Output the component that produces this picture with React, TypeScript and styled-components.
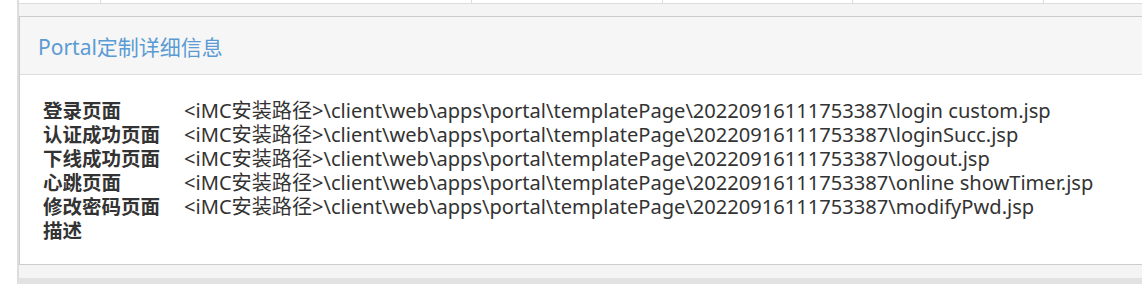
import * as React from "react";
import styled, { createGlobalStyle } from "styled-components";

// styled components
const GlobalStyle = createGlobalStyle`
body {
  margin: 0;
  background-color: #ffffff;
  font-family: "Noto Sans", "Noto Sans CJK SC", sans-serif;
}
`;

const Page = styled.main`
  padding-left: 17px;
  height: 284px;
  overflow: hidden;
`;

const Frame = styled.div`
  border-left: 2px solid #dddddd;
  border-bottom: 6px solid #e2e2e2;
  background-color: #f4f4f4;
  padding-bottom: 13px;
`;

const TableRow = styled.div`
  display: flex;
  height: 3px;
  background-color: #ffffff;
  border-bottom: 1px solid #dddddd;
`;

const TableCell = styled.div<{ $w: number }>`
  width: ${(p) => p.$w}px;
  flex: none;
  border-right: 1px solid #dddddd;
`;

const Gap = styled.div`
  height: 12px;
`;

const Panel = styled.section`
  border-top: 1px solid #cccccc;
  border-left: 1px solid #cccccc;
  border-bottom: 1px solid #cccccc;
  background-color: #ffffff;
`;

const PanelHeader = styled.header`
  height: 57px;
  display: flex;
  align-items: center;
  padding-left: 18px;
  background-color: #f6f6f6;
  border-bottom: 1px solid #dddddd;
  font-size: 21px;
  color: #5a9bd3;
`;

const Grid = styled.div`
  display: grid;
  grid-template-columns: 141px 1fr;
  padding: 24px 0 21px 23px;
  font-size: 20.1px;
  line-height: 24px;
  color: #333333;
`;

const Label = styled.div`
  font-weight: bold;
  font-size: 19.5px;
  white-space: nowrap;
`;

const Value = styled.div`
  white-space: nowrap;
`;

// data
const base = "<iMC安装路径>\\client\\web\\apps\\portal\\templatePage\\20220916111753387\\";

const rows: [string, string][] = [
  ["登录页面", base + "login custom.jsp"],
  ["认证成功页面", base + "loginSucc.jsp"],
  ["下线成功页面", base + "logout.jsp"],
  ["心跳页面", base + "online showTimer.jsp"],
  ["修改密码页面", base + "modifyPwd.jsp"],
  ["描述", ""],
];

const columns = [81, 370, 190, 189, 190, 200];

// components
const App = () => {
  return (
    <React.Fragment>
      <GlobalStyle />
      <Page>
        <Frame>
          <TableRow>
            {columns.map((w, i) => (
              <TableCell key={i} $w={w} />
            ))}
          </TableRow>
          <Gap />
          <Panel>
            <PanelHeader>Portal定制详细信息</PanelHeader>
            <Grid>
              {rows.map(([label, value]) => (
                <React.Fragment key={label}>
                  <Label>{label}</Label>
                  <Value>{value}</Value>
                </React.Fragment>
              ))}
            </Grid>
          </Panel>
        </Frame>
      </Page>
    </React.Fragment>
  );
};

export default App;
